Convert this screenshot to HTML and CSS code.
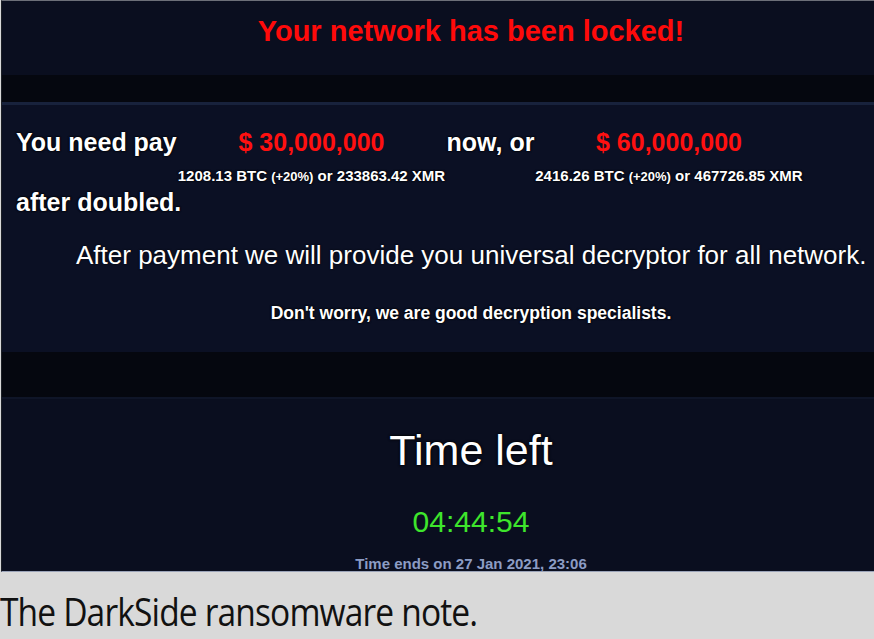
FILE: index.html
```html
<!DOCTYPE html>
<html>
<head>
    <meta name="viewport" content="width=device-width, initial-scale=1.0">
    <title>DarkSide note</title>
    <link rel="stylesheet" href="styles.css">
</head>
<body>
    <!-- Screenshot of the note -->
    <div class="note">
        <div class="header">
            <h1 class="title">Your network has been locked!</h1>
        </div>
        <div class="band"></div>

        <div class="middle">
            <div class="pay-row">
                <div class="cell cell-text first">You need pay</div>
                <div class="cell cell-amount wide">
                    <div class="amount">$ 30,000,000</div>
                    <div class="crypto">1208.13 BTC <small>(+20%)</small> or 233863.42 XMR</div>
                </div>
                <div class="cell cell-text now">now, or</div>
                <div class="cell cell-amount wide2">
                    <div class="amount">$ 60,000,000</div>
                    <div class="crypto">2416.26 BTC <small>(+20%)</small> or 467726.85 XMR</div>
                </div>
            </div>
            <div class="cell-text doubled">after doubled.</div>

            <p class="promise">After payment we will provide you universal decryptor for all network.</p>
            <p class="worry">Don't worry, we are good decryption specialists.</p>
        </div>
        <div class="band band-low"></div>

        <div class="timer">
            <div class="time-left">Time left</div>
            <div class="clock">04:44:54</div>
            <div class="ends">Time ends on 27 Jan 2021, 23:06</div>
        </div>
    </div>

    <p class="caption">The DarkSide ransomware note.</p>
</body>
</html>
```

FILE: styles.css
```css
body {
    margin: 0;
    background-color: #d9d9d9;
    font-family: "Liberation Sans", Arial, sans-serif;
    overflow: hidden;
}

/* the dark note */
.note {
    height: 570px;
    margin-left: 1px;
    border-left: 1px solid #1c1f26;
    border-top: 1px solid #6c6f78;
    border-bottom: 1px solid #9aa3b8;
    background-color: #0a0e1f;
    color: #fff;
    overflow: hidden;
}

.header {
    height: 74px;
    padding-left: 66px;
    text-align: center;
}

.title {
    margin: 0;
    padding-top: 14px;
    font-size: 29px;
    color: #ff0a0a;
}

.band {
    height: 27px;
    background-color: #05070f;
    border-bottom: 3px solid #18223c;
}

.band-low {
    height: 45px;
    border-bottom: 2px solid #0f1528;
}

.middle {
    height: 247px;
    background-color: #0b1024;
}

.cell-text {
    font-size: 25px;
    font-weight: bold;
    text-shadow: 0 0 2px #000, 0 0 2px #000, 0 0 1px #000;
}

.pay-row {
    display: flex;
    padding-top: 23px;
    padding-left: 14px;
}

.first {
    width: 161px;
}

.wide {
    width: 269px;
}

.now {
    width: 89px;
    text-align: center;
}

.wide2 {
    width: 268px;
}

.cell-amount {
    text-align: center;
}

.amount {
    font-size: 25px;
    font-weight: bold;
    color: #ff1010;
}

.crypto {
    margin-top: 10px;
    font-size: 15px;
    font-weight: bold;
    white-space: nowrap;
    text-shadow: 0 0 2px #000, 0 0 2px #000;
}

.crypto small {
    font-size: 13px;
}

.doubled {
    margin-top: 4px;
    padding-left: 14px;
}

.promise {
    margin: 23px 0 0 0;
    padding-left: 74px;
    font-size: 26px;
    white-space: nowrap;
    text-shadow: 0 0 2px #000;
}

.worry {
    margin: 32px 0 0 0;
    padding-left: 66px;
    text-align: center;
    font-size: 17.5px;
    font-weight: bold;
    text-shadow: 0 0 2px #000, 0 0 2px #000;
}

.timer {
    height: 172px;
    padding-left: 66px;
    text-align: center;
}

.time-left {
    padding-top: 27px;
    font-size: 43px;
    text-shadow: 0 0 2px #000, 0 0 3px #000;
}

.clock {
    margin-top: 30px;
    font-size: 30px;
    color: #3ee52c;
}

.ends {
    margin-top: 16px;
    font-size: 15px;
    font-weight: bold;
    color: #8c9cc4;
}

.caption {
    margin: 12px 0 0 0;
    font-family: "Open Sans", sans-serif;
    font-size: 39px;
    color: #111;
    letter-spacing: -1px;
    white-space: nowrap;
    transform-origin: left;
    transform: scaleX(0.86);
}
```
